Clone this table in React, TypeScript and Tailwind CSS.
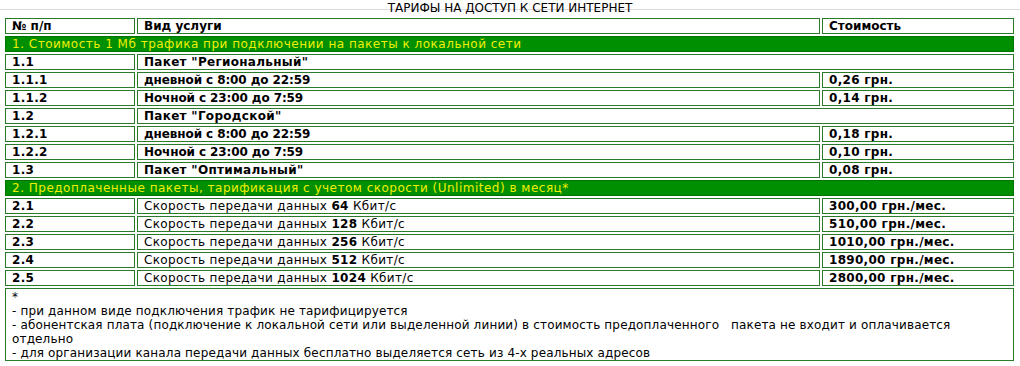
import React from 'react'

type Row =
  | { kind: 'section'; text: string }
  | { kind: 'pkg'; num: string; name: string; price?: string }
  | { kind: 'rate'; num: string; name: string; price: string }
  | { kind: 'speed'; num: string; speed: string; price: string }

const rows: Row[] = [
  { kind: 'section', text: '1. Стоимость 1 Мб трафика при подключении на пакеты к локальной сети' },
  { kind: 'pkg', num: '1.1', name: 'Пакет "Региональный"' },
  { kind: 'rate', num: '1.1.1', name: 'дневной с 8:00 до 22:59', price: '0,26 грн.' },
  { kind: 'rate', num: '1.1.2', name: 'Ночной с 23:00 до 7:59', price: '0,14 грн.' },
  { kind: 'pkg', num: '1.2', name: 'Пакет "Городской"' },
  { kind: 'rate', num: '1.2.1', name: 'дневной с 8:00 до 22:59', price: '0,18 грн.' },
  { kind: 'rate', num: '1.2.2', name: 'Ночной с 23:00 до 7:59', price: '0,10 грн.' },
  { kind: 'pkg', num: '1.3', name: 'Пакет "Оптимальный"', price: '0,08 грн.' },
  { kind: 'section', text: '2. Предоплаченные пакеты, тарификация с учетом скорости (Unlimited) в месяц*' },
  { kind: 'speed', num: '2.1', speed: '64', price: '300,00 грн./мес.' },
  { kind: 'speed', num: '2.2', speed: '128', price: '510,00 грн./мес.' },
  { kind: 'speed', num: '2.3', speed: '256', price: '1010,00 грн./мес.' },
  { kind: 'speed', num: '2.4', speed: '512', price: '1890,00 грн./мес.' },
  { kind: 'speed', num: '2.5', speed: '1024', price: '2800,00 грн./мес.' },
]

const cell = 'border border-[#2a7a2a] h-[16px] px-[6px] py-0 leading-[14px] align-middle whitespace-nowrap overflow-hidden'
const bold = 'font-bold tracking-[0.3px]'
const head = 'font-bold tracking-[0px]'
const rateName = 'font-bold tracking-[-0.1px]'

export default function App() {
  return (
    <div
      className="w-[1020px] h-[366px] bg-white text-black text-[12px] tracking-[0.35px] overflow-hidden"
      style={{ fontFamily: '"DejaVu Sans", Verdana, sans-serif' }}
    >
      {/* заголовок */}
      <div className="h-[16px] text-center text-[12px] tracking-normal leading-[17px] bg-[linear-gradient(to_bottom,transparent_9px,#dadada_9px,#dadada_10px,transparent_10px)]">
        ТАРИФЫ НА ДОСТУП К СЕТИ ИНТЕРНЕТ
      </div>

      <table className="ml-[3px] w-[1013px] table-fixed border-separate border-spacing-[2px]">
        <colgroup>
          <col className="w-[130px]" />
          <col className="w-[683px]" />
          <col />
        </colgroup>
        <tbody>
          <tr>
            <td className={`${cell} ${head}`}>№ п/п</td>
            <td className={`${cell} ${head}`}>Вид услуги</td>
            <td className={`${cell} ${head}`}>Стоимость</td>
          </tr>

          {rows.map((r, i) => {
            if (r.kind === 'section') {
              return (
                <tr key={i}>
                  <td colSpan={3} className={`${cell} bg-[#008f00] border-[#007400] text-[#f0f000] tracking-[0.5px]`}>
                    {r.text}
                  </td>
                </tr>
              )
            }
            if (r.kind === 'pkg') {
              return (
                <tr key={i}>
                  <td className={`${cell} ${bold}`}>{r.num}</td>
                  {r.price ? (
                    <>
                      <td className={`${cell} ${bold}`}>{r.name}</td>
                      <td className={`${cell} ${bold}`}>{r.price}</td>
                    </>
                  ) : (
                    <td colSpan={2} className={`${cell} ${bold}`}>{r.name}</td>
                  )}
                </tr>
              )
            }
            if (r.kind === 'rate') {
              return (
                <tr key={i}>
                  <td className={`${cell} ${bold}`}>{r.num}</td>
                  <td className={`${cell} ${rateName}`}>{r.name}</td>
                  <td className={`${cell} ${bold}`}>{r.price}</td>
                </tr>
              )
            }
            return (
              <tr key={i}>
                <td className={`${cell} ${bold}`}>{r.num}</td>
                <td className={cell}>
                  Скорость передачи данных <b className={bold}>{r.speed}</b> Кбит/с
                </td>
                <td className={`${cell} ${bold}`}>{r.price}</td>
              </tr>
            )
          })}

          <tr>
            <td colSpan={3} className="border border-[#2a7a2a] px-[6px] pt-[1px] pb-0 leading-[14px] tracking-[0.15px] align-top">
              *<br />
              - при данном виде подключения трафик не тарифицируется<br />
              - абонентская плата (подключение к локальной сети или выделенной линии) в стоимость предоплаченного&nbsp;&nbsp; пакета не входит и оплачивается
              <br />
              отдельно<br />
              - для организации канала передачи данных бесплатно выделяется сеть из 4-х реальных адресов
            </td>
          </tr>
        </tbody>
      </table>
    </div>
  )
}
